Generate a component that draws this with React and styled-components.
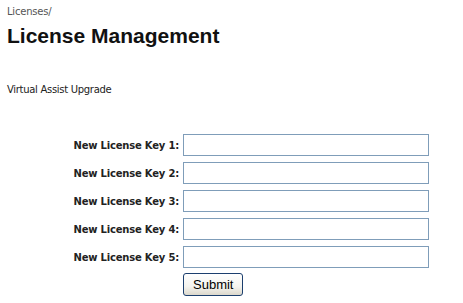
import React from "react";
import styled, { createGlobalStyle } from "styled-components";

const GlobalStyle = createGlobalStyle`
  body {
    margin: 0;
    background: #ffffff;
    font-family: "DejaVu Sans", Verdana, sans-serif;
    color: #222222;
  }
`;

const Page = styled.div`
  padding: 5px 7px;
`;

const Breadcrumb = styled.div`
  font-size: 10px;
  color: #555555;
  line-height: 13px;
  letter-spacing: -0.2px;
`;

const Title = styled.h1`
  margin: 5px 0 0;
  font-family: "Liberation Sans", Arial, sans-serif;
  font-size: 21px;
  font-weight: bold;
  color: #111111;
  line-height: 26px;
`;

const Subtitle = styled.p`
  margin: 34px 0 0;
  font-size: 10px;
  color: #222222;
  line-height: 13px;
  letter-spacing: -0.3px;
`;

const Form = styled.form`
  margin-top: 38px;
  display: grid;
  grid-template-columns: 172px 246px;
  column-gap: 4px;
  row-gap: 6px;
  align-items: center;
`;

const Label = styled.label`
  text-align: right;
  font-size: 10px;
  font-weight: bold;
  color: #222222;
  letter-spacing: -0.2px;
`;

const Input = styled.input`
  box-sizing: border-box;
  width: 246px;
  height: 22px;
  border: 1px solid #7f9db9;
  padding: 2px 4px;
  font-size: 11px;
`;

const Submit = styled.button`
  grid-column: 2;
  justify-self: start;
  margin-top: -1px;
  height: 23px;
  padding: 0 9px;
  font-family: "Liberation Sans", Arial, sans-serif;
  font-size: 13px;
  color: #000000;
  border: 1px solid #1c3f6e;
  border-radius: 3px;
  background: linear-gradient(#ffffff, #f4f3ee 60%, #dcd8cc);
`;

const keys = [1, 2, 3, 4, 5];

export default function App() {
  return (
    <Page>
      <GlobalStyle />
      <Breadcrumb>Licenses/</Breadcrumb>
      <Title>License Management</Title>
      <Subtitle>Virtual Assist Upgrade</Subtitle>
      <Form onSubmit={(e) => e.preventDefault()}>
        {keys.map((n) => (
          <React.Fragment key={n}>
            <Label htmlFor={`key${n}`}>New License Key {n}:</Label>
            <Input id={`key${n}`} type="text" />
          </React.Fragment>
        ))}
        <Submit type="submit">Submit</Submit>
      </Form>
    </Page>
  );
}
